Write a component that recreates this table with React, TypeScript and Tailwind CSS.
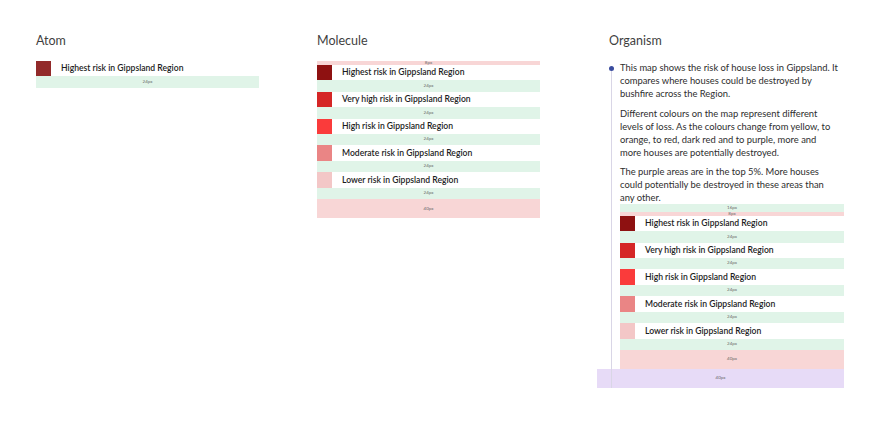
import React from 'react';

interface Level {
  label: string;
  swatch: string;
}

const levels: Level[] = [
  { label: 'Highest risk in Gippsland Region', swatch: 'bg-[#8e1111]' },
  { label: 'Very high risk in Gippsland Region', swatch: 'bg-[#d52626]' },
  { label: 'High risk in Gippsland Region', swatch: 'bg-[#fa3b3b]' },
  { label: 'Moderate risk in Gippsland Region', swatch: 'bg-[#ea8585]' },
  { label: 'Lower risk in Gippsland Region', swatch: 'bg-[#f3c7c7]' },
];

const font = "font-['Lato','Liberation_Sans',sans-serif]";

function Spacer({ label, className }: { label: string; className: string }) {
  return (
    <div className={`flex items-center justify-center text-[4.5px] leading-none text-[#6b6b6b] ${className}`}>
      {label}
    </div>
  );
}

function LegendRow({ level }: { level: Level }) {
  return (
    <div className="flex h-[15.4px] items-center bg-white">
      <div className={`h-full w-[15.4px] shrink-0 ${level.swatch}`}></div>
      <span className="ml-[9.6px] whitespace-nowrap text-[8.6px] font-semibold leading-none text-[#1d1d1d]">
        {level.label}
      </span>
    </div>
  );
}

function Legend() {
  return (
    <div>
      <Spacer label="8px" className="h-[3.8px] bg-[#f8d6d6]" />
      {levels.map((level, index) => (
        <div key={index}>
          <LegendRow level={level} />
          <Spacer label="24px" className="h-[11.5px] bg-[#e0f4e8]" />
        </div>
      ))}
      <Spacer label="40px" className="h-[19px] bg-[#f8d6d6]" />
    </div>
  );
}

function Title({ children }: { children: React.ReactNode }) {
  return <h2 className="text-[12.5px] leading-[16px] text-[#3f3f3f]">{children}</h2>;
}

const paragraphs: string[][] = [
  [
    'This map shows the risk of house loss in Gippsland. It',
    'compares where houses could be destroyed by',
    'bushfire across the Region.',
  ],
  [
    'Different colours on the map represent different',
    'levels of loss. As the colours change from yellow, to',
    'orange, to red, dark red and to purple, more and',
    'more houses are potentially destroyed.',
  ],
  [
    'The purple areas are in the top 5%. More houses',
    'could potentially be destroyed in these areas than',
    'any other.',
  ],
];

export default function App() {
  return (
    <div className={`flex h-[431px] w-[880px] bg-white pl-[36px] pt-[33px] ${font}`}>
      {/* Atom */}
      <div className="w-[223px]">
        <Title>Atom</Title>
        <div className="mt-[12px]">
          <div className="flex h-[15.4px] items-center">
            <div className="h-full w-[15.4px] bg-[#922a2a]"></div>
            <span className="ml-[9.6px] whitespace-nowrap text-[8.6px] font-semibold leading-none text-[#1d1d1d]">
              Highest risk in Gippsland Region
            </span>
          </div>
          <Spacer label="24px" className="h-[11.5px] bg-[#e0f4e8]" />
        </div>
      </div>

      {/* Molecule */}
      <div className="ml-[58px] w-[223px]">
        <Title>Molecule</Title>
        <div className="mt-[12px]">
          <Legend />
        </div>
      </div>

      {/* Organism */}
      <div className="ml-[57px] w-[247px]">
        <div className="pl-[12px]">
          <Title>Organism</Title>
        </div>
        <div className="relative mt-[12px]">
          <div className="pl-[23px]">
            <div className="space-y-[6.6px] text-[9.4px] leading-[13px] text-[#2e2e2e]">
              {paragraphs.map((lines, index) => (
                <p key={index}>
                  {lines.map((line, lineIndex) => (
                    <span key={lineIndex} className="block whitespace-nowrap">
                      {line}
                    </span>
                  ))}
                </p>
              ))}
            </div>
            <Spacer label="16px" className="h-[7.7px] bg-[#e0f4e8]" />
            <Legend />
          </div>
          <Spacer label="40px" className="h-[19px] bg-[#e7dbf7]" />
          <div className="absolute bottom-0 left-[14px] top-[6px] w-px bg-[#d9d6e6]"></div>
          <div className="absolute left-[12px] top-[4.5px] h-[5px] w-[5px] rounded-full bg-[#3a4c9e]"></div>
        </div>
      </div>
    </div>
  );
}
